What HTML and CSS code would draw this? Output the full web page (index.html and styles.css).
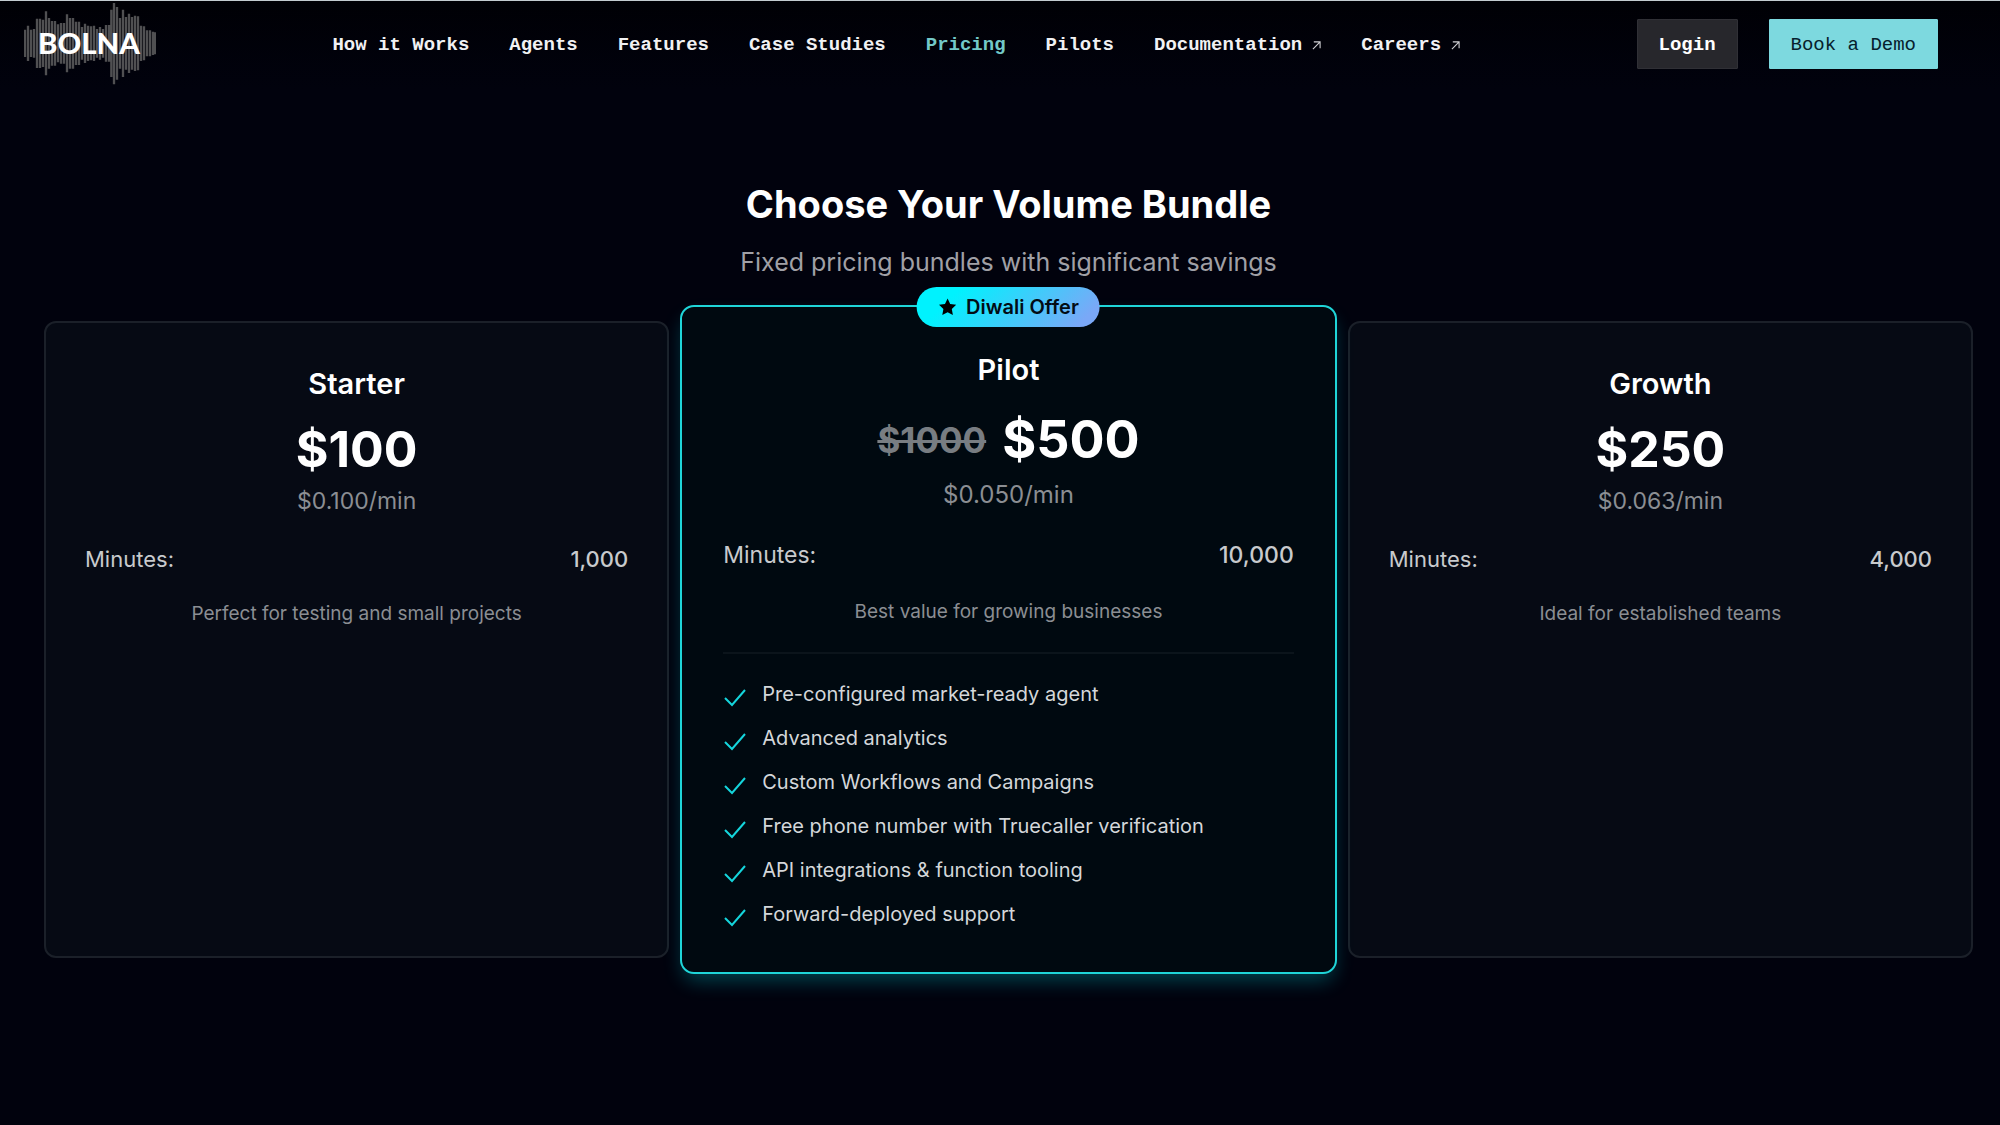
FILE: index.html
```html
<!DOCTYPE html>
<html lang="en">
<head>
    <meta charset="UTF-8">
    <meta name="viewport" content="width=device-width, initial-scale=1.0">
    <title>Bolna - Pricing</title>
    <link rel="stylesheet" href="styles.css">
</head>
<body>
    <header class="header">
        <a class="logo" href="#" aria-label="Bolna">
            <svg width="132" height="82" viewBox="0 0 396 246">
                <path class="logo-wave" d="M3 80V162M12 68V174M21 80V162M30 78V164M39 47V195M48 47V195M57 50V192M66 25V217M75 45V197M84 54V188M93 54V188M102 64V178M111 60V182M120 60V182M129 34V208M138 45V197M147 45V197M156 56V186M165 56V186M174 72V170M183 62V180M192 68V174M201 70V172M210 68V174M219 78V164M228 72V170M237 78V164M246 66V176M255 66V176M262 20V222M270 0V244M279 12V230M288 45V197M297 20V222M306 42V200M315 32V210M324 42V200M333 38V204M342 40V202M351 68V174M360 70V172M369 82V160M378 82V160M387 86V156M394 88V154"/>
                <text class="logo-text" x="42" y="154">BOLNA</text>
            </svg>
        </a>
        <nav class="nav">
            <a href="#">How it Works</a>
            <a href="#">Agents</a>
            <a href="#">Features</a>
            <a href="#">Case Studies</a>
            <a href="#" class="active">Pricing</a>
            <a href="#">Pilots</a>
            <a href="#">Documentation
                <svg class="arrow" viewBox="0 0 10 10"><path d="M1 9L9 1M2 1H9V8"/></svg>
            </a>
            <a href="#">Careers
                <svg class="arrow" viewBox="0 0 10 10"><path d="M1 9L9 1M2 1H9V8"/></svg>
            </a>
        </nav>
        <div class="header-buttons">
            <button class="btn btn-login">Login</button>
            <button class="btn btn-demo">Book a Demo</button>
        </div>
    </header>

    <main class="pricing">
        <h1>Choose Your Volume Bundle</h1>
        <p class="subtitle">Fixed pricing bundles with significant savings</p>

        <div class="cards">
            <section class="card">
                <h2>Starter</h2>
                <div class="price">$100</div>
                <p class="rate">$0.100/min</p>
                <div class="minutes"><span>Minutes:</span><span class="amount">1,000</span></div>
                <p class="description">Perfect for testing and small projects</p>
            </section>

            <section class="card featured">
                <div class="badge">
                    <svg viewBox="0 0 20 20"><path d="M10 1.5l2.6 5.6 6 .7-4.4 4.2 1.1 6.1L10 15.2l-5.3 2.9 1.1-6.1L1.4 7.8l6-.7z"/></svg>
                    Diwali Offer
                </div>
                <h2>Pilot</h2>
                <div class="price"><s>$1000</s>$500</div>
                <p class="rate">$0.050/min</p>
                <div class="minutes"><span>Minutes:</span><span class="amount">10,000</span></div>
                <p class="description">Best value for growing businesses</p>
                <ul class="features">
                    <li><svg viewBox="0 0 24 24"><path d="M2 13l7 7L22 5"/></svg>Pre-configured market-ready agent</li>
                    <li><svg viewBox="0 0 24 24"><path d="M2 13l7 7L22 5"/></svg>Advanced analytics</li>
                    <li><svg viewBox="0 0 24 24"><path d="M2 13l7 7L22 5"/></svg>Custom Workflows and Campaigns</li>
                    <li><svg viewBox="0 0 24 24"><path d="M2 13l7 7L22 5"/></svg>Free phone number with Truecaller verification</li>
                    <li><svg viewBox="0 0 24 24"><path d="M2 13l7 7L22 5"/></svg>API integrations &amp; function tooling</li>
                    <li><svg viewBox="0 0 24 24"><path d="M2 13l7 7L22 5"/></svg>Forward-deployed support</li>
                </ul>
            </section>

            <section class="card">
                <h2>Growth</h2>
                <div class="price">$250</div>
                <p class="rate">$0.063/min</p>
                <div class="minutes"><span>Minutes:</span><span class="amount">4,000</span></div>
                <p class="description">Ideal for established teams</p>
            </section>
        </div>
    </main>
</body>
</html>
```
FILE: styles.css
```css
* {
    box-sizing: border-box;
}
body {
    margin: 0;
    min-height: 100vh;
    background-color: #01020d;
    color: #fff;
    font-family: Inter, "Liberation Sans", sans-serif;
}
h1, h2, p, ul {
    margin: 0;
    padding: 0;
}

/* header */
.header {
    display: flex;
    justify-content: space-between;
    align-items: center;
    padding: 2px 62px 4px 24px;
    border-top: 1px solid #c3cbd0;
    background: linear-gradient(#000005, #01020d);
}
.logo svg {
    display: block;
}
.logo-wave {
    fill: none;
    stroke: #505052;
    stroke-width: 7;
}
.logo-text {
    fill: #fff;
    font-family: Lato, sans-serif;
    font-size: 88px;
    font-weight: 900;
}
.nav {
    display: flex;
    gap: 40px;
}
.nav a {
    display: flex;
    align-items: center;
    gap: 10px;
    padding-top: 2px;
    color: #f1f1f3;
    font-family: "Liberation Mono", monospace;
    font-size: 19px;
    line-height: 24px;
    font-weight: 700;
    text-decoration: none;
}
.nav a.active {
    color: #73c9c8;
}
.arrow {
    width: 9px;
    height: 9px;
    fill: none;
    stroke: #d0d0d4;
    stroke-width: 1.2;
}
.header-buttons {
    display: flex;
    gap: 31px;
}
.btn {
    height: 50px;
    padding: 2px 21px 0;
    border: 1px solid #303036;
    border-radius: 1px;
    background-color: #27272c;
    color: #fff;
    font-family: "Liberation Mono", monospace;
    font-size: 19px;
    font-weight: 700;
    cursor: pointer;
}
.btn-demo {
    border-color: #7dd9df;
    background-color: #7dd9df;
    color: #06202c;
    font-weight: 400;
}

/* pricing */
.pricing {
    padding: 89px 27px 40px 44px;
    text-align: center;
}
h1 {
    font-size: 38px;
    line-height: 52px;
    font-weight: 700;
}
.subtitle {
    margin-top: 14px;
    color: #a0a0a6;
    font-size: 25px;
    line-height: 36px;
}
.cards {
    display: grid;
    grid-template-columns: 1fr 1.05fr 1fr;
    gap: 11px;
    margin-top: 25px;
}
.card {
    margin: 16px 0;
    padding: 43px 39px;
    border: 2px solid #1b2029;
    border-radius: 12px;
    background-color: #060a14;
}
.card h2 {
    font-size: 29px;
    line-height: 36px;
    font-weight: 600;
}
.price {
    display: flex;
    justify-content: center;
    align-items: center;
    gap: 16px;
    margin-top: 17px;
    font-size: 50px;
    line-height: 60px;
    font-weight: 700;
}
.price s {
    color: #787d82;
    font-size: 35px;
}
.rate {
    margin-top: 4px;
    color: #8b8e93;
    font-size: 23px;
    line-height: 36px;
}
.minutes {
    display: flex;
    justify-content: space-between;
    margin-top: 22px;
    color: #c8cacd;
    font-size: 22px;
    line-height: 36px;
}
.amount {
    font-weight: 500;
}
.description {
    margin-top: 22px;
    color: #8b8e93;
    font-size: 19px;
    line-height: 30px;
}

.card.featured {
    position: relative;
    margin: 0;
    padding: 45px 41px 43px;
    border-color: #1fd5d8;
    border-radius: 14px;
    background-color: #000910;
    box-shadow: 0 10px 20px -4px rgba(0, 229, 240, 0.3);
}
.featured .price {
    margin-top: 22px;
    font-size: 52px;
}
.featured .rate {
    margin-top: 7px;
    font-size: 24px;
}
.featured .minutes {
    margin-top: 24px;
    font-size: 23px;
}
.featured .description {
    margin-top: 24px;
}
.badge {
    position: absolute;
    top: -20px;
    left: 50%;
    transform: translateX(-50%);
    display: flex;
    align-items: center;
    gap: 8px;
    padding: 0 21px;
    border-radius: 20px;
    background: linear-gradient(135deg, #00f2fe 20%, #7aa8f7 90%);
    color: #020c14;
    font-size: 20px;
    line-height: 40px;
    font-weight: 600;
    white-space: nowrap;
}
.badge svg {
    width: 20px;
    height: 20px;
}
.features {
    display: flex;
    flex-direction: column;
    gap: 14px;
    margin-top: 25px;
    padding-top: 25px;
    border-top: 2px solid #0b141b;
    list-style: none;
    text-align: left;
}
.features li {
    display: flex;
    align-items: center;
    gap: 15px;
    color: #d4d7da;
    font-size: 20px;
    line-height: 30px;
}
.features svg {
    width: 24px;
    height: 24px;
    margin-top: 6px;
    fill: none;
    stroke: #14d5dc;
    stroke-width: 2;
}
```
